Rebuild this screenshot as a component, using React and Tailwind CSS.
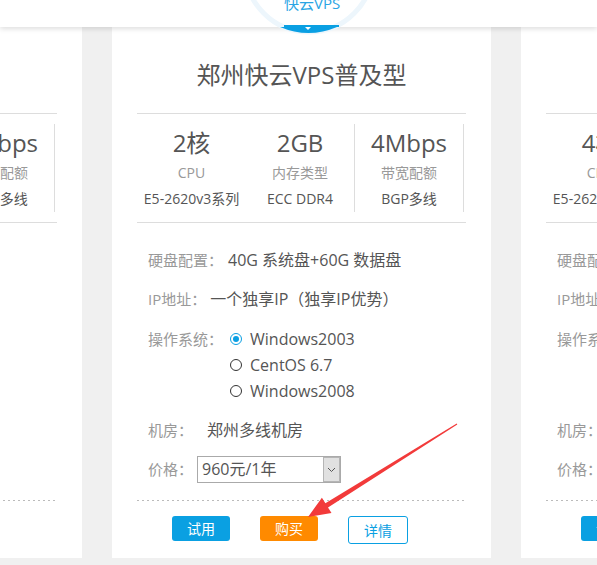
import React from "react";

function Spec({ big, label, sub, border }) {
  return (
    <div className={border ? "flex h-[88px] flex-col items-center border-r border-[#ddd]" : "flex h-[88px] flex-col items-center"}>
      <div className="mt-[4px] whitespace-nowrap text-[24px] leading-[30px] text-[#555]">{big}</div>
      <div className="mt-[5px] whitespace-nowrap text-[14px] leading-[20px] text-[#999]">{label}</div>
      <div className="mt-[6px] whitespace-nowrap text-[14px] leading-[20px] text-[#555]">{sub}</div>
    </div>
  );
}

function Radio({ checked, text }) {
  return (
    <div className="flex h-[26px] items-center">
      {checked ? (
        <span className="flex h-[12px] w-[12px] items-center justify-center rounded-full border border-[#0a9fe3]">
          <span className="h-[6px] w-[6px] rounded-full bg-[#0a9fe3]" />
        </span>
      ) : (
        <span className="h-[12px] w-[12px] rounded-full border border-[#333]" />
      )}
      <span className="ml-[8px] whitespace-nowrap">{text}</span>
    </div>
  );
}

function Card({ title, specs }) {
  return (
    <div className="h-[531px] w-[379px] shrink-0 bg-white">
      <div className="whitespace-nowrap pt-[33px] text-center text-[24px] leading-[30px] text-[#555]">{title}</div>
      <div className="mx-[25px] mt-[23px] grid grid-cols-[109px_109px_109px] border-y border-[#ddd] py-[10px]">
        <Spec big={specs[0]} label="CPU" sub="E5-2620v3系列" />
        <Spec big={specs[1]} label="内存类型" sub="ECC DDR4" border />
        <Spec big={specs[2]} label="带宽配额" sub="BGP多线" border />
      </div>
      <div className="pl-[36px] text-[16px] text-[#555]">
        <div className="mt-[25px] flex items-center whitespace-nowrap leading-[24px]">
          <span className="text-[15px] text-[#999]">硬盘配置：</span>
          <span className="ml-[5px]">40G 系统盘+60G 数据盘</span>
        </div>
        <div className="mt-[15px] flex items-center whitespace-nowrap leading-[24px]">
          <span className="text-[15px] text-[#999]">IP地址：</span>
          <span className="ml-[4px]">一个独享IP（独享IP优势）</span>
        </div>
        <div className="mt-[15px] flex items-start">
          <span className="whitespace-nowrap text-[15px] leading-[26px] text-[#999]">操作系统：</span>
          <div className="ml-[7px] flex flex-col">
            <Radio checked text="Windows2003" />
            <Radio text="CentOS 6.7" />
            <Radio text="Windows2008" />
          </div>
        </div>
        <div className="mt-[14px] flex items-center whitespace-nowrap leading-[24px]">
          <span className="text-[15px] text-[#999]">机房：</span>
          <span className="ml-[14px]">郑州多线机房</span>
        </div>
        <div className="mt-[14px] flex h-[27px] items-center whitespace-nowrap">
          <span className="text-[15px] text-[#999]">价格：</span>
          <div className="ml-[4px] flex h-[27px] w-[144px] items-stretch border border-[#aaa] bg-white">
            <span className="flex-1 pl-[4px] leading-[25px]">960元/1年</span>
            <span className="flex w-[17px] items-center justify-center border border-[#b5b5b5] bg-[#e1e1e1]">
              <svg width="9" height="6" viewBox="0 0 9 6">
                <polyline points="1,1 4.5,4.5 8,1" fill="none" stroke="#555" strokeWidth="1" />
              </svg>
            </span>
          </div>
        </div>
      </div>
      <div className="mx-[25px] mt-[17px] h-px bg-[linear-gradient(to_right,#bbb_2px,transparent_2px)] bg-size-[5px_1px]" />
      <div className="mt-[15px] flex items-start gap-[30px] pl-[60px] text-[14px]">
        <button className="flex h-[25px] w-[58px] items-center justify-center rounded-[3px] bg-[#0aa0e2] text-white">试用</button>
        <button className="flex h-[25px] w-[58px] items-center justify-center rounded-[3px] bg-[#ff8a00] text-white">购买</button>
        <button className="flex h-[28px] w-[60px] items-center justify-center rounded-[3px] border border-[#0aa0e2] bg-white text-[#0aa0e2]">详情</button>
      </div>
    </div>
  );
}

export default function App() {
  return (
    <div className="relative h-[565px] w-[597px] overflow-hidden bg-[#f0f0f0] font-[family-name:'Open_Sans','Noto_Sans_CJK_SC',sans-serif]">
      <div className="relative z-10 h-[27px] bg-white shadow-[0_2px_5px_rgba(0,0,0,0.13)]">
        <svg className="absolute left-0 top-0 overflow-visible" width="597" height="27">
          <circle cx="309" cy="-32" r="64" fill="none" stroke="#edf6fc" strokeWidth="5" />
          <path d="M280 27 Q308.5 39 337 27 Z" fill="#0a9fe3" />
          <polygon points="305,27 311,27 308,30" fill="#fff" />
        </svg>
        <div className="relative ml-[284px] h-[27px] w-[55px] border-b-2 border-[#0aa0e2]">
          <span className="relative -top-[6px] block whitespace-nowrap text-[15px] leading-[18px] text-[#2aa5e4]">快云VPS</span>
        </div>
      </div>
      <div className="-ml-[297px] flex gap-[30px]">
        <Card title="郑州快云VPS入门型" specs={["1核", "1GB", "2Mbps"]} />
        <Card title="郑州快云VPS普及型" specs={["2核", "2GB", "4Mbps"]} />
        <Card title="郑州快云VPS标准型" specs={["4核", "4GB", "6Mbps"]} />
      </div>
      <svg className="pointer-events-none absolute left-0 top-0 z-20" width="597" height="565">
        <polygon
          points="308,517 331.5,512.9 328,507.4 457.3,424.4 456.7,423.6 325.4,503.2 321.9,497.7"
          fill="#f23a3a"
        />
      </svg>
    </div>
  );
}
